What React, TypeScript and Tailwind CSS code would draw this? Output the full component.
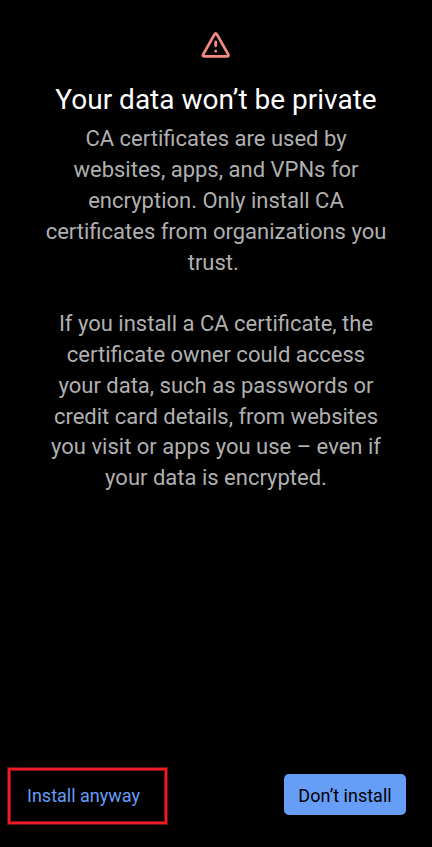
export default function App() {
  return (
    <main className="flex h-[847px] w-[432px] flex-col bg-black font-['Roboto',sans-serif] text-[#b0b0b0]">
      <svg className="mt-[31px] ml-[200px] h-[28px] w-[31px]" viewBox="0 0 31 28" fill="none" stroke="#f28b82" strokeWidth="2.8">
        <path d="M14.5 3.4 Q15.7 1.5 16.9 3.4 L28.2 23.4 Q29.1 25.4 26.9 25.4 H4.5 Q2.3 25.4 3.2 23.4 Z" strokeLinejoin="round" />
        <path d="M15.7 11 V14.8 M15.7 20.15 V20.2" strokeLinecap="round" />
      </svg>
      <h1 className="mt-[24px] h-[34px] text-center text-[28px] leading-[34px] whitespace-nowrap text-white">Your data won’t be private</h1>
      <div className="mt-[7.4px] text-center text-[22px] leading-[30.8px] whitespace-nowrap">
        <p>CA certificates are used by<br />websites, apps, and VPNs for<br />encryption. Only install CA<br />certificates from organizations you<br />trust.&nbsp;</p>
        <p className="mt-[30.8px]">If you install a CA certificate, the<br />certificate owner could access<br />your data, such as passwords or<br />credit card details, from websites<br />you visit or apps you use – even if<br />your data is encrypted.</p>
      </div>
      <footer className="mt-auto mb-[22px] flex h-[58px] items-start justify-between pr-[26px] pl-[8px] text-[18px]">
        <button className="mt-[1px] h-[56px] w-[159px] border-2 border-[#ed1c24] pb-[1px] pl-[17px] text-left text-[#669df6] shadow-[0_0_0_1px_#6b0d10,inset_0_0_0_1px_#8a1015]">Install anyway</button>
        <button className="mt-[7px] h-[41px] w-[122px] rounded-[5px] bg-[#669df6] pt-[2px] text-black">Don’t install</button>
      </footer>
    </main>
  );
}
